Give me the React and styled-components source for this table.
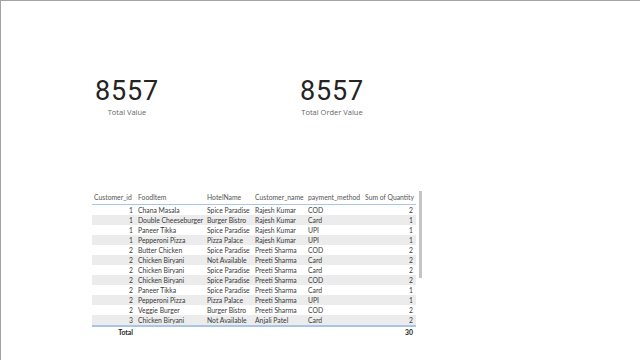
import React from "react";
import styled, { createGlobalStyle } from "styled-components";

const Global = createGlobalStyle`
  html, body { margin: 0; padding: 0; background: #fff; }
  body { font-family: Lato, "Noto Sans", sans-serif; }
`;

const Page = styled.div`
  width: 640px;
  height: 360px;
  box-sizing: border-box;
  border-top: 1px solid #a3a3a3;
  border-left: 1px solid #a3a3a3;
  background: #fff;
  display: flex;
  flex-direction: column;
  overflow: hidden;
`;

const KpiRow = styled.div`
  display: flex;
  gap: 75px;
  padding: 74px 0 0 61px;
`;

const Card = styled.div`
  width: 130px;
  display: flex;
  flex-direction: column;
  align-items: center;
`;

const KpiValue = styled.div`
  font-family: Roboto, "Noto Sans", sans-serif;
  font-size: 27px;
  line-height: 32px;
  letter-spacing: 0.8px;
  color: #252423;
`;

const KpiLabel = styled.div`
  font-family: "Open Sans", sans-serif;
  font-size: 7.5px;
  line-height: 10px;
  color: #666;
`;

const TableWrap = styled.div`
  position: relative;
  margin: 74px 0 0 91px;
  width: 324px;
`;

const Grid = styled.div`
  display: grid;
  grid-template-columns: 44px 69px 48px 53px 57px 53px;
  font-size: 6.8px;
  color: #3a3a3a;
`;

const HeadCell = styled.div`
  height: 13px;
  line-height: 12px;
  padding: 0 ${(p) => (p.$right ? "2px" : "0")} 0 ${(p) => (p.$right ? "0" : "2px")};
  text-align: ${(p) => (p.$right ? "right" : "left")};
  color: #555;
  white-space: nowrap;
  border-bottom: 1px solid #a9c6e6;
`;

const Cell = styled.div`
  height: 10px;
  line-height: 10px;
  padding: 0 ${(p) => (p.$right ? "3px" : "0")} 0 ${(p) => (p.$right ? "0" : "2px")};
  text-align: ${(p) => (p.$right ? "right" : "left")};
  background: ${(p) => (p.$alt ? "#ececec" : "#fff")};
  white-space: nowrap;
  overflow: hidden;
`;

const TotalCell = styled.div`
  height: 12px;
  line-height: 11px;
  padding: 0 3px 0 0;
  text-align: right;
  font-weight: 700;
  color: #222;
  border-top: 2px solid #a9c6e6;
`;

const ScrollThumb = styled.div`
  position: absolute;
  left: 327px;
  top: 0;
  width: 3px;
  height: 87px;
  background: #c4c4c4;
`;

const rows = [
  [1, "Chana Masala", "Spice Paradise", "Rajesh Kumar", "COD", 2],
  [1, "Double Cheeseburger", "Burger Bistro", "Rajesh Kumar", "Card", 1],
  [1, "Paneer Tikka", "Spice Paradise", "Rajesh Kumar", "UPI", 1],
  [1, "Pepperoni Pizza", "Pizza Palace", "Rajesh Kumar", "UPI", 1],
  [2, "Butter Chicken", "Spice Paradise", "Preeti Sharma", "COD", 2],
  [2, "Chicken Biryani", "Not Available", "Preeti Sharma", "Card", 2],
  [2, "Chicken Biryani", "Spice Paradise", "Preeti Sharma", "Card", 2],
  [2, "Chicken Biryani", "Spice Paradise", "Preeti Sharma", "COD", 2],
  [2, "Paneer Tikka", "Spice Paradise", "Preeti Sharma", "Card", 1],
  [2, "Pepperoni Pizza", "Pizza Palace", "Preeti Sharma", "UPI", 1],
  [2, "Veggie Burger", "Burger Bistro", "Preeti Sharma", "COD", 2],
  [3, "Chicken Biryani", "Not Available", "Anjali Patel", "Card", 2],
];

const headers = ["Customer_id", "FoodItem", "HotelName", "Customer_name", "payment_method", "Sum of Quantity"];

export default function App() {
  return (
    <>
      <Global />
      <Page>
        <KpiRow>
          <Card>
            <KpiValue>8557</KpiValue>
            <KpiLabel>Total Value</KpiLabel>
          </Card>
          <Card>
            <KpiValue>8557</KpiValue>
            <KpiLabel>Total Order Value</KpiLabel>
          </Card>
        </KpiRow>
        <TableWrap>
          <Grid>
            {headers.map((h, i) => (
              <HeadCell key={h} $right={i === 5}>{h}</HeadCell>
            ))}
            {rows.map((r, ri) =>
              r.map((v, ci) => (
                <Cell key={ri + "-" + ci} $alt={ri % 2 === 1} $right={ci === 0 || ci === 5}>
                  {v}
                </Cell>
              ))
            )}
            <TotalCell>Total</TotalCell>
            <TotalCell />
            <TotalCell />
            <TotalCell />
            <TotalCell />
            <TotalCell>30</TotalCell>
          </Grid>
          <ScrollThumb />
        </TableWrap>
      </Page>
    </>
  );
}
